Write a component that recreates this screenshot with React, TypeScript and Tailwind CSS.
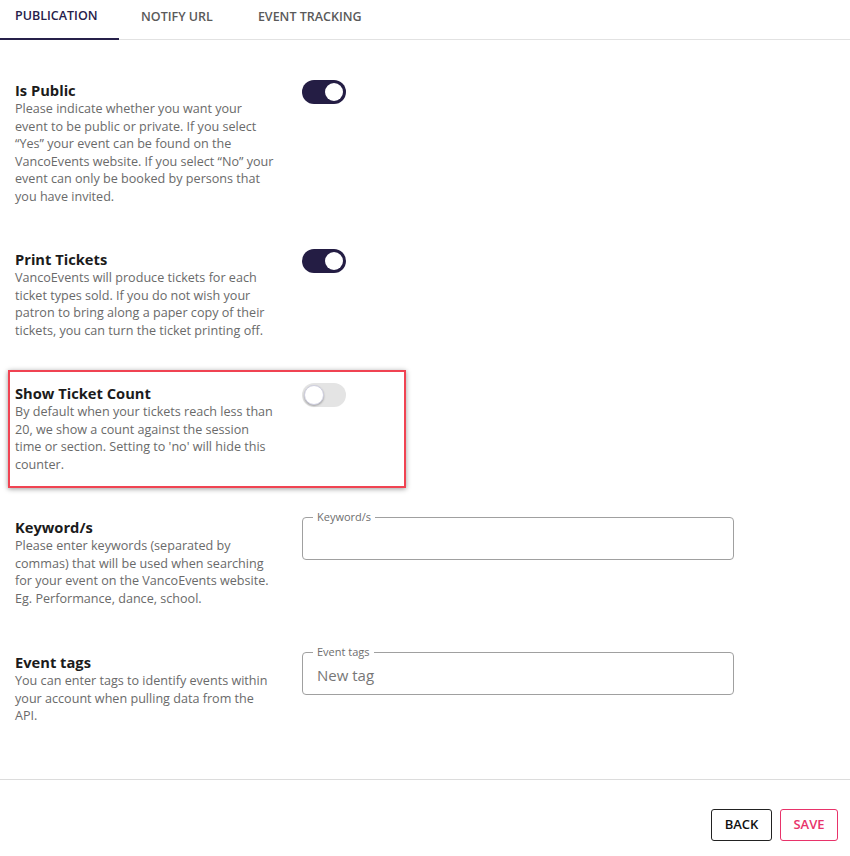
import React from 'react';

type SettingProps = {
    title: string;
    description: string;
    children: React.ReactNode;
};

function Toggle({ on }: { on: boolean }) {
    return (
        <button
            type="button"
            className={
                on
                    ? 'relative w-[44px] h-[24px] rounded-full bg-[#241d44] flex items-center justify-end px-[3px]'
                    : 'relative w-[44px] h-[24px] rounded-full bg-[#e4e4e4] flex items-center justify-start px-[2px]'
            }
        >
            <span
                className={
                    on
                        ? 'block w-[18px] h-[18px] rounded-full bg-white'
                        : 'block w-[20px] h-[20px] rounded-full bg-white shadow-[0_1px_2px_rgba(0,0,0,0.3)] border border-[#cfcfe0]'
                }
            />
        </button>
    );
}

function Setting({ title, description, children }: SettingProps) {
    return (
        <div className="grid grid-cols-[287px_432px]">
            <div>
                <h3 className="text-[14.7px] leading-[20px] font-bold text-[#1b1b1b]">{title}</h3>
                <p className="text-[12.6px] leading-[17.5px] text-[#6a6a6a] w-[261px]">{description}</p>
            </div>
            <div>{children}</div>
        </div>
    );
}

function OutlinedField({ label, placeholder }: { label: string; placeholder?: string }) {
    return (
        <fieldset className="border border-[#a0a0a0] rounded-[4px] h-[50px] px-[10px] -mt-[7px]">
            <legend className="px-[4px] text-[11px] leading-[14px] text-[#6e6e6e]">{label}</legend>
            <div className="text-[15px] leading-[20px] text-[#777] pl-[4px] pt-[6px]">{placeholder}</div>
        </fieldset>
    );
}

export default function App() {
    return (
        <div className="w-[850px] h-[856px] bg-white font-['Open_Sans',sans-serif]">
            {/* Tabs */}
            <div className="flex h-[40px] border-b border-[#e2e2e2] text-[12.5px] font-semibold uppercase">
                <div className="w-[119px] pl-[15px] pb-[5px] flex items-center text-[#26204a] border-b-2 border-[#26204a] -mb-px">
                    Publication
                </div>
                <div className="pl-[22px] pb-[4px] flex items-center text-[#5a5a5a]">Notify URL</div>
                <div className="pl-[45px] pb-[4px] flex items-center text-[#5a5a5a]">Event Tracking</div>
            </div>

            <div className="pl-[15px] pt-[40px] flex flex-col">
                <Setting
                    title="Is Public"
                    description={'Please indicate whether you want your event to be public or private. If you select \u201cYes\u201d your event can be found on the VancoEvents website. If you select \u201cNo\u201d your event can only be booked by persons that you have invited.'}
                >
                    <Toggle on />
                </Setting>

                <div className="mt-[44px]">
                    <Setting
                        title="Print Tickets"
                        description="VancoEvents will produce tickets for each ticket types sold. If you do not wish your patron to bring along a paper copy of their tickets, you can turn the ticket printing off."
                    >
                        <Toggle on />
                    </Setting>
                </div>

                {/* highlighted row */}
                <div className="mt-[31px] -ml-[7px] w-[398px] border-2 border-[#f04352] shadow-[0_1px_5px_rgba(0,0,0,0.4)] pl-[5px] pt-[11px] pb-[13px]">
                    <Setting
                        title="Show Ticket Count"
                        description="By default when your tickets reach less than 20, we show a count against the session time or section. Setting to 'no' will hide this counter."
                    >
                        <Toggle on={false} />
                    </Setting>
                </div>

                <div className="mt-[29px]">
                    <Setting
                        title="Keyword/s"
                        description="Please enter keywords (separated by commas) that will be used when searching for your event on the VancoEvents website. Eg. Performance, dance, school."
                    >
                        <OutlinedField label="Keyword/s" />
                    </Setting>
                </div>

                <div className="mt-[45px]">
                    <Setting
                        title="Event tags"
                        description="You can enter tags to identify events within your account when pulling data from the API."
                    >
                        <OutlinedField label="Event tags" placeholder="New tag" />
                    </Setting>
                </div>
            </div>

            <div className="mt-[54px] border-t border-[#dcdcdc]" />

            <div className="flex justify-end gap-[8px] pr-[12px] pt-[29px]">
                <button className="w-[61px] h-[32px] border border-[#222] rounded-[3px] text-[13px] font-semibold text-[#111]">
                    BACK
                </button>
                <button className="w-[58px] h-[32px] border border-[#e8336a] rounded-[3px] text-[13px] font-semibold text-[#e8336a]">
                    SAVE
                </button>
            </div>
        </div>
    );
}
